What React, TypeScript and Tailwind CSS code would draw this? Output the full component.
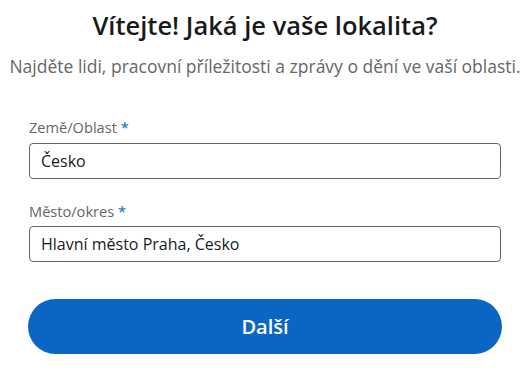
export default function App() {
  return (
    <div
      className="w-[530px] h-[378px] bg-white"
      style={{ fontFamily: '"Open Sans", "Noto Sans", sans-serif' }}
    >
      <h1 className="pt-[7px] text-center text-[25.5px] leading-[36px] font-semibold text-[#1a1a1a]">
        Vítejte! Jaká je vaše lokalita?
      </h1>
      <p className="mt-[10px] text-center text-[17.5px] leading-[26px] text-[#666]">
        Najděte lidi, pracovní příležitosti a zprávy o dění ve vaší oblasti.
      </p>

      <div className="mx-auto mt-[38px] w-[472px]">
        <label className="block text-[14.6px] leading-[20px] text-[#666]">
          Země/Oblast <span className="text-[#0a66c2]">*</span>
        </label>
        <div className="mt-[6px] flex h-[36px] items-center rounded-[4px] border border-[#666] px-[11px] text-[16px] text-[#1a1a1a]">
          Česko
        </div>

        <label className="mt-[22px] block text-[14.6px] leading-[20px] text-[#666]">
          Město/okres <span className="text-[#0a66c2]">*</span>
        </label>
        <div className="mt-[5px] flex h-[36px] items-center rounded-[4px] border border-[#666] px-[11px] text-[16px] text-[#1a1a1a]">
          Hlavní město Praha, Česko
        </div>
      </div>

      <button className="mx-auto mt-[37px] flex h-[55px] w-[474px] items-center justify-center rounded-full bg-[#0a66c2] text-[20px] font-semibold text-white">
        Další
      </button>
    </div>
  );
}
